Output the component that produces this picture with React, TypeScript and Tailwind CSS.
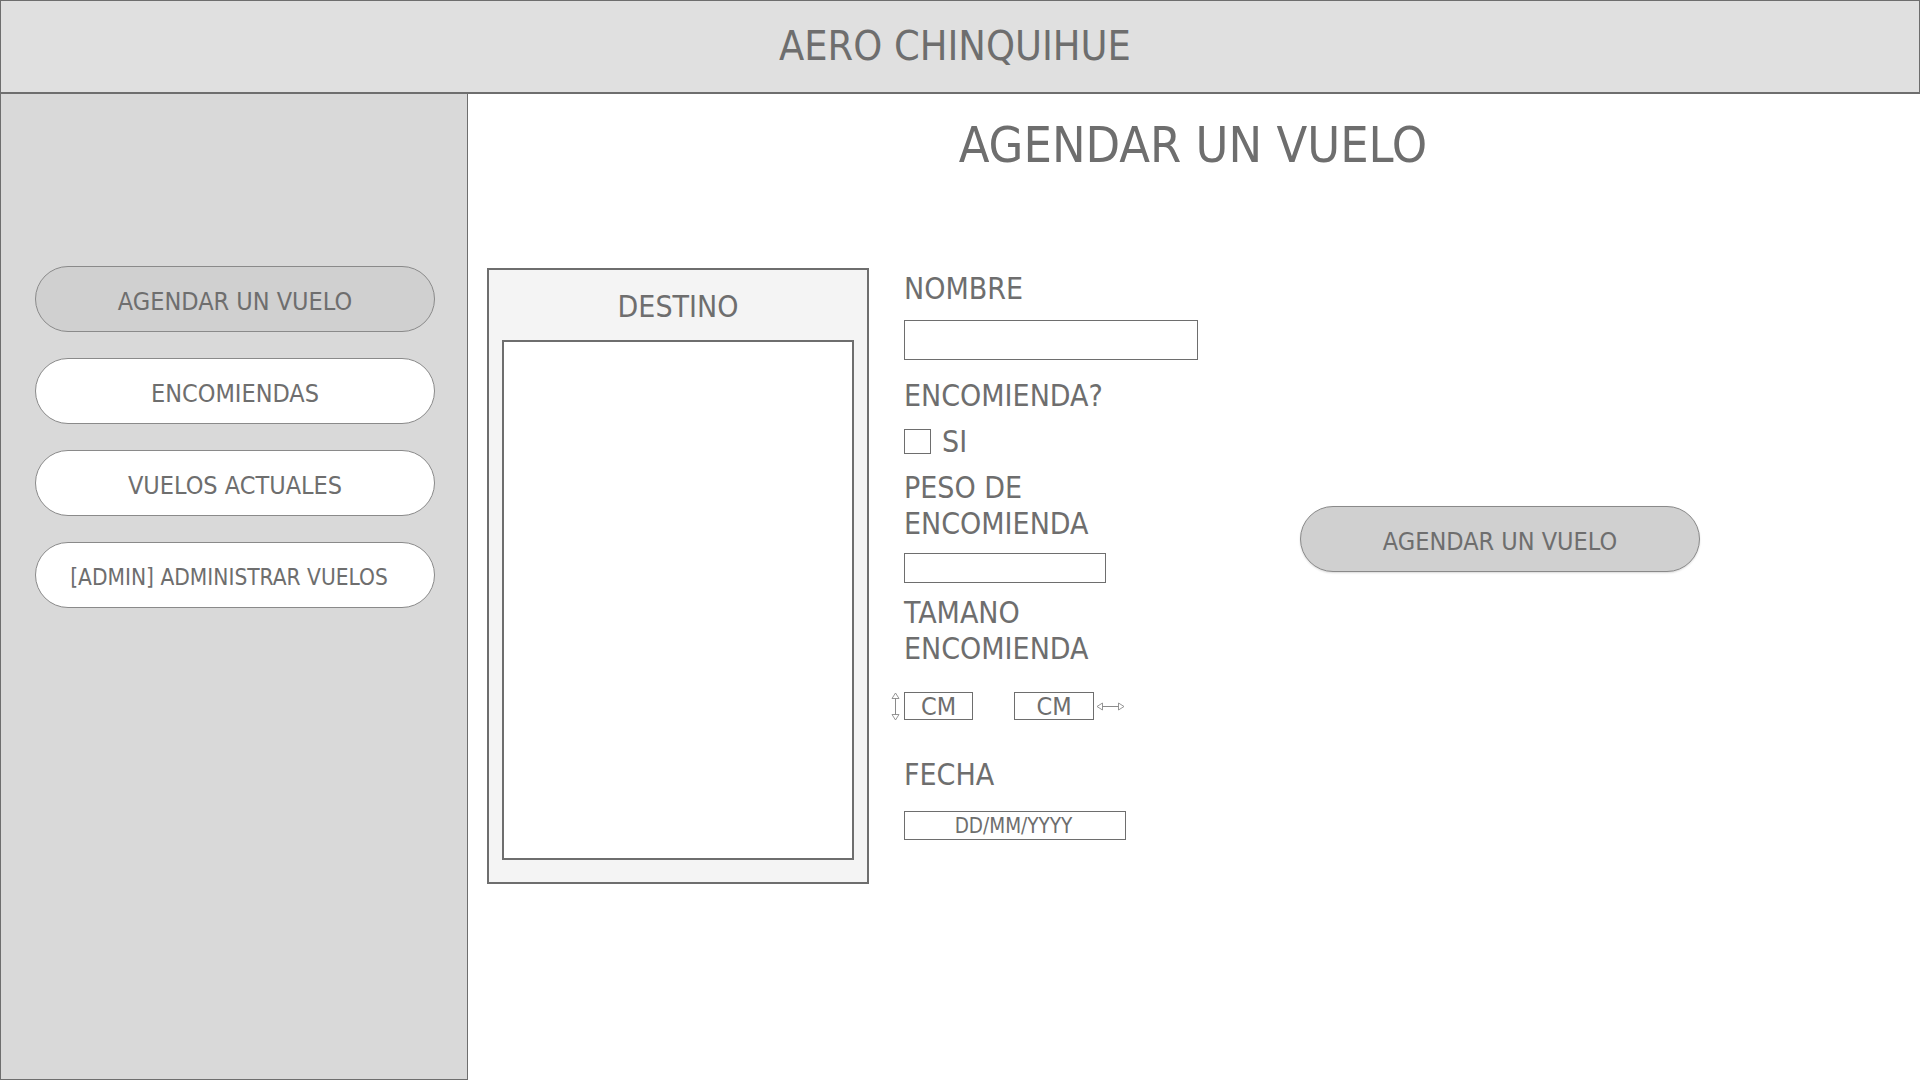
import { useState } from "react";

const navItems = [
  "AGENDAR UN VUELO",
  "ENCOMIENDAS",
  "VUELOS ACTUALES",
  "[ADMIN] ADMINISTRAR VUELOS",
];

function ArrowVertical() {
  return (
    <svg width="9" height="29" viewBox="0 0 9 29" className="shrink-0">
      <line x1="4.5" y1="6" x2="4.5" y2="23" stroke="#8a8a8a" strokeWidth="1" />
      <polygon points="1,6.5 4.5,1 8,6.5" fill="#fff" stroke="#8a8a8a" strokeWidth="0.9" />
      <polygon points="1,22.5 4.5,28 8,22.5" fill="#fff" stroke="#8a8a8a" strokeWidth="0.9" />
    </svg>
  );
}

function ArrowHorizontal() {
  return (
    <svg width="29" height="9" viewBox="0 0 29 9" className="shrink-0">
      <line x1="6" y1="4.5" x2="23" y2="4.5" stroke="#8a8a8a" strokeWidth="1" />
      <polygon points="6.5,1 1,4.5 6.5,8" fill="#fff" stroke="#8a8a8a" strokeWidth="0.9" />
      <polygon points="22.5,1 28,4.5 22.5,8" fill="#fff" stroke="#8a8a8a" strokeWidth="0.9" />
    </svg>
  );
}

export default function App() {
  const [active, setActive] = useState(0);
  const [encomienda, setEncomienda] = useState(false);

  return (
    <div className="w-[1920px] h-[1080px] overflow-hidden flex flex-col bg-white text-[#6e6e6e] font-['DejaVu_Sans_Condensed','DejaVu_Sans',sans-serif]">
      {/* header */}
      <header className="h-[94px] shrink-0 bg-[#e0e0e0] border border-b-2 border-[#6e6e6e] flex items-center justify-center pr-[10px]">
        <h1 className="text-[41px] leading-none">AERO CHINQUIHUE</h1>
      </header>

      <div className="flex flex-1 min-h-0">
        {/* sidebar */}
        <aside className="w-[468px] shrink-0 bg-[#d9d9d9] border-l border-r border-b border-[#6e6e6e] pt-[172px] pl-[34px] flex flex-col gap-[26px]">
          {navItems.map((item, i) => (
            <button
              key={item}
              onClick={() => setActive(i)}
              className={`w-[400px] h-[66px] rounded-full border border-[#8a8a8a] flex items-center justify-center leading-none pt-[4px] ${
                i === 3 ? "text-[22.5px] pr-[12px]" : "text-[25px]"
              } ${active === i ? "bg-[#d0d0d0]" : "bg-white"}`}
            >
              {item}
            </button>
          ))}
        </aside>

        {/* main */}
        <main className="flex-1 flex flex-col pt-[21px]">
          <div className="w-[1450px] text-center text-[50px] leading-[60px]">AGENDAR UN VUELO</div>

          <div className="flex mt-[93px] pl-[19px]">
            {/* destino panel */}
            <section className="w-[382px] h-[616px] shrink-0 bg-[#f4f4f4] border-2 border-[#6e6e6e] flex flex-col px-[13px] pb-[22px]">
              <div className="h-[70px] flex items-center justify-center text-[30px] leading-none pt-[4px]">DESTINO</div>
              <div className="flex-1 bg-white border-2 border-[#6e6e6e]" />
            </section>

            {/* form */}
            <div className="w-[396px] shrink-0 ml-[35px] pt-[2px] flex flex-col text-[30px] leading-[36px]">
              <label className="pt-[1px]">NOMBRE</label>
              <input className="mt-[13px] w-[294px] h-[40px] border border-[#6e6e6e] bg-white outline-none px-2 text-[22px]" />

              <span className="mt-[18px]">ENCOMIENDA?</span>
              <div className="mt-[9px] h-[36px] flex items-center gap-[11px]">
                <button
                  onClick={() => setEncomienda(!encomienda)}
                  className="w-[27px] h-[25px] border border-[#6e6e6e] bg-white flex items-center justify-center text-[18px] leading-none"
                >
                  {encomienda ? "✓" : ""}
                </button>
                <span className="pt-[2px]">SI</span>
              </div>

              <span className="mt-[11px]">
                PESO DE
                <br />
                ENCOMIENDA
              </span>
              <input className="mt-[11px] w-[202px] h-[30px] border border-[#6e6e6e] bg-white outline-none px-2 text-[20px]" />

              <span className="mt-[12px]">
                TAMANO
                <br />
                ENCOMIENDA
              </span>
              <div className="mt-[25px] h-[28px] flex items-center -ml-[13px]">
                <ArrowVertical />
                <div className="ml-[4px] w-[69px] h-[28px] border border-[#6e6e6e] flex items-center justify-center text-[25px] leading-none pt-[1px]">CM</div>
                <div className="ml-[41px] w-[80px] h-[28px] border border-[#6e6e6e] flex items-center justify-center text-[25px] leading-none pt-[1px]">CM</div>
                <div className="ml-[2px]">
                  <ArrowHorizontal />
                </div>
              </div>

              <span className="mt-[37px]">FECHA</span>
              <div className="mt-[18px] w-[222px] h-[29px] border border-[#6e6e6e] flex items-center justify-center text-[20.5px] leading-none pt-[1px] pr-[3px]">
                DD/MM/YYYY
              </div>
            </div>

            {/* submit */}
            <div className="pt-[238px]">
              <button className="w-[400px] h-[66px] rounded-full bg-[#d0d0d0] border border-[#8a8a8a] shadow-[0_1px_2px_rgba(0,0,0,0.15)] text-[25px] leading-none pt-[4px] flex items-center justify-center">
                AGENDAR UN VUELO
              </button>
            </div>
          </div>
        </main>
      </div>
    </div>
  );
}
